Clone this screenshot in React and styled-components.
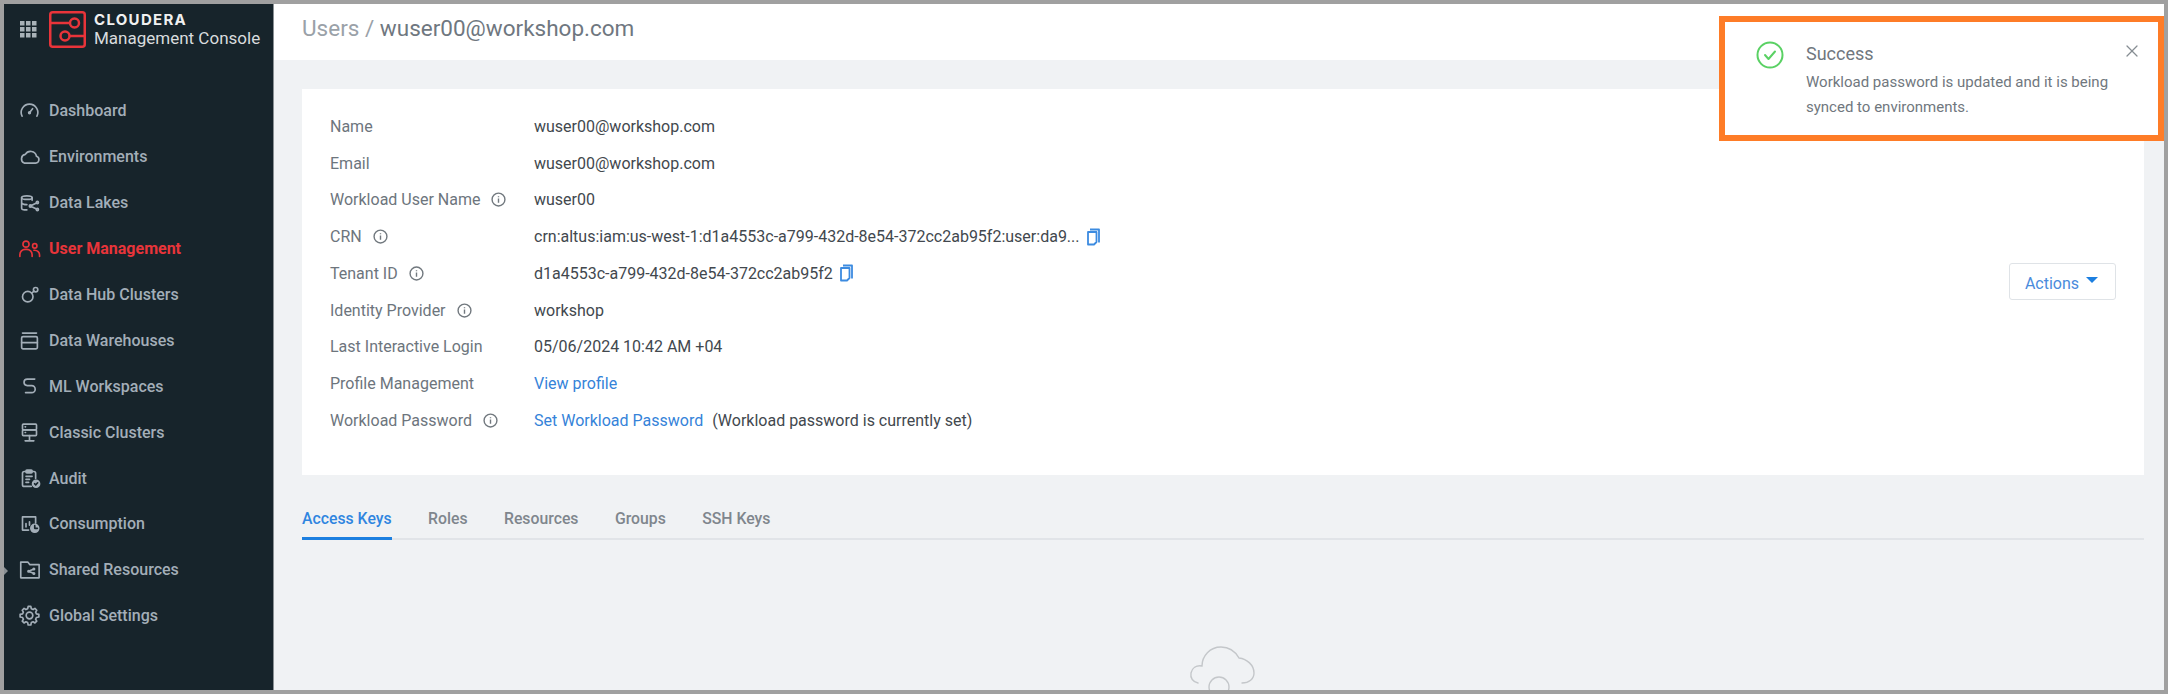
import React from 'react';
import styled, { createGlobalStyle } from 'styled-components';
import { X } from 'lucide-react';

const GlobalStyle = createGlobalStyle`
    html, body {
        margin: 0;
        height: 100%;
        overflow: hidden;
        background: #f0f2f4;
    }
    * {
        box-sizing: border-box;
    }
`;

const Frame = styled.div`
    position: relative;
    display: flex;
    height: 100vh;
    overflow: hidden;
    border: 4px solid #a0a0a0;
    font-family: Roboto, "Liberation Sans", sans-serif;
`;

const Sidebar = styled.aside`
    position: relative;
    flex: 0 0 270px;
    background: #17242b;
    border-right: 1px solid #8a9094;
`;

const Brand = styled.div`
    display: flex;
    align-items: center;
    height: 46px;
    margin-top: 2px;
    padding-left: 16px;
`;

const Waffle = styled.svg`
    width: 17px;
    height: 17px;
    margin-right: 12px;
    fill: #a9b2b8;
`;

const BrandText = styled.div`
    display: flex;
    flex-direction: column;
    margin-left: 8px;
    color: #d9dcde;
`;

const BrandName = styled.div`
    font-family: Inter, sans-serif;
    font-size: 15px;
    font-weight: 700;
    line-height: 17px;
    letter-spacing: 1.3px;
    color: #f0f0f0;
`;

const BrandProduct = styled.div`
    font-size: 17px;
    line-height: 20px;
    white-space: nowrap;
`;

const Nav = styled.nav`
    display: flex;
    flex-direction: column;
    margin-top: 36px;
`;

const NavItem = styled.div`
    display: flex;
    align-items: center;
    height: 45.9px;
    padding-left: 14px;
    gap: 8px;
    font-size: 16px;
    font-weight: ${(p) => (p.$active ? 700 : 500)};
    color: ${(p) => (p.$active ? '#e8343a' : '#a3aeb8')};
`;

const NavIcon = styled.svg`
    flex: none;
    width: 23px;
    height: 21px;
    fill: none;
    stroke: currentColor;
    stroke-width: 1.9;
    stroke-linecap: round;
    stroke-linejoin: round;
`;

const ExpandArrow = styled.div`
    position: absolute;
    left: 0;
    top: 563px;
    width: 0;
    height: 0;
    border-top: 4px solid transparent;
    border-bottom: 4px solid transparent;
    border-left: 4px solid #8a9094;
`;

const Main = styled.main`
    flex: 1;
    min-width: 0;
    display: flex;
    flex-direction: column;
    background: #f0f2f4;
`;

const Header = styled.header`
    flex: 0 0 56px;
    display: flex;
    align-items: center;
    padding: 0 0 8px 28px;
    background: #fff;
    font-size: 22.5px;
    color: #6f7780;
`;

const Crumb = styled.span`
    color: #9aa1a8;
`;

const Content = styled.div`
    flex: 1;
    min-height: 0;
    overflow: hidden;
    padding: 29px 20px 0 28px;
`;

const Card = styled.section`
    display: flex;
    align-items: flex-start;
    justify-content: space-between;
    height: 386px;
    padding: 19px 28px 0;
    background: #fff;
`;

const Details = styled.div`
    display: grid;
    grid-template-columns: 204px auto;
    grid-auto-rows: 36.75px;
    align-items: center;
    font-size: 16px;
`;

const Label = styled.div`
    display: flex;
    align-items: center;
    gap: 11px;
    color: #6d757d;
`;

const Value = styled.div`
    display: flex;
    align-items: center;
    color: #42484e;
`;

const LinkText = styled.span`
    color: #3583d9;
`;

const Note = styled.span`
    margin-left: 9px;
`;

const InfoIcon = styled.svg`
    width: 15px;
    height: 15px;
    fill: none;
    stroke: #71787e;
    stroke-width: 1.3;
`;

const CopyIcon = styled.svg`
    width: 15px;
    height: 18px;
    margin-left: 6px;
    fill: none;
    stroke: #3c8be0;
    stroke-width: 1.8;
    stroke-linejoin: round;
`;

const ActionsButton = styled.button`
    display: flex;
    align-items: center;
    justify-content: center;
    gap: 7px;
    width: 107px;
    height: 37px;
    margin-top: 155px;
    padding: 4px 2px 0 0;
    background: #fff;
    border: 1px solid #dfe3e7;
    border-radius: 3px;
    font-family: inherit;
    font-size: 16px;
    color: #4a8bdc;
`;

const Caret = styled.span`
    width: 0;
    height: 0;
    margin-top: -8px;
    border-left: 6px solid transparent;
    border-right: 6px solid transparent;
    border-top: 6px solid #1c7fe0;
`;

const Tabs = styled.div`
    display: flex;
    gap: 36.4px;
    margin-top: 24px;
    height: 41px;
    border-bottom: 2px solid #e1e4e8;
`;

const Tab = styled.div`
    height: 41px;
    padding-top: 10px;
    font-size: 15.8px;
    font-weight: 500;
    color: ${(p) => (p.$active ? '#2f85e0' : '#7f868d')};
    border-bottom: 3px solid ${(p) => (p.$active ? '#1c7fe0' : 'transparent')};
`;

const EmptyState = styled.div`
    display: flex;
    justify-content: center;
    margin-top: 100px;
`;

const EmptyIcon = styled.svg`
    width: 68px;
    height: 50px;
    fill: none;
    stroke: #c4c7ca;
    stroke-width: 1.4;
    stroke-linecap: round;
`;

const Toast = styled.div`
    position: absolute;
    top: 12px;
    right: 0;
    display: flex;
    width: 445px;
    height: 125px;
    padding: 21px 0 0 31px;
    background: #fff;
    border: 6px solid #fe7c27;
`;

const ToastIcon = styled.svg`
    flex: none;
    width: 28px;
    height: 28px;
    margin-right: 22px;
    margin-top: -2px;
    fill: none;
    stroke: #5ad164;
    stroke-width: 2;
    stroke-linecap: round;
    stroke-linejoin: round;
`;

const ToastBody = styled.div`
    width: 330px;
    color: #70777e;
`;

const ToastTitle = styled.div`
    font-size: 18px;
    line-height: 22px;
`;

const ToastText = styled.div`
    margin-top: 5px;
    font-size: 15px;
    line-height: 25px;
`;

const CloseIcon = styled(X)`
    position: absolute;
    top: 19px;
    right: 16px;
    color: #868d93;
`;

const NAV_ITEMS = [
    {
        label: 'Dashboard',
        icon: (
            <>
                <path d="M4.5 18.5a9.5 9.5 0 1 1 17 0" />
                <circle cx="13" cy="14.5" r="1" />
                <path d="M13.6 13.6 16.5 10" />
            </>
        ),
    },
    {
        label: 'Environments',
        icon: <path d="M7 19.5h13a4 4 0 0 0 1-7.8A7 7 0 0 0 8.2 9.6 5.2 5.2 0 0 0 7 19.5z" />,
    },
    {
        label: 'Data Lakes',
        icon: (
            <>
                <ellipse cx="10" cy="6.5" rx="6" ry="2" />
                <path d="M4 6.5v12c0 1 2 2 6 2M16 6.5v3M4 12.5c1 1.500 3 2 6 2" />
                <circle cx="22" cy="12" r="1.200" />
                <circle cx="22" cy="20" r="1.200" />
                <circle cx="14" cy="16" r="1.200" />
                <path d="m15 15.500 6-3M15 16.500l6 3" />
            </>
        ),
    },
    {
        label: 'User Management',
        active: true,
        icon: (
            <>
                <circle cx="9" cy="7" r="3.500" />
                <circle cx="19" cy="9" r="2.500" />
                <path d="M2 21v-2a6 6 0 0 1 6-6h2a6 6 0 0 1 6 6v2M18 14h1a5.500 5.500 0 0 1 5.500 5.500V21" />
            </>
        ),
    },
    {
        label: 'Data Hub Clusters',
        icon: (
            <>
                <circle cx="11" cy="14.500" r="6" />
                <circle cx="20" cy="6.500" r="2.500" />
                <path d="m15.500 10.500 2.700-2.300" />
            </>
        ),
    },
    {
        label: 'Data Warehouses',
        icon: (
            <>
                <path d="M5 3.500h16" />
                <rect x="4" y="7.500" width="18" height="14" rx="1.500" />
                <path d="M4 14.500h18" />
            </>
        ),
    },
    {
        label: 'ML Workspaces',
        icon: <path d="M19 3.500H10.500a3.500 3.500 0 0 0 0 7.500h5a3.800 3.800 0 0 1 0 8H8.500" />,
    },
    {
        label: 'Classic Clusters',
        icon: (
            <>
                <rect x="5" y="2.500" width="16" height="6.500" rx="1" />
                <rect x="5" y="9" width="16" height="6.500" rx="1" />
                <path d="M13 15.500V21M8 21.500h10M8 5.500h.5M8 12h.5" />
            </>
        ),
    },
    {
        label: 'Audit',
        icon: (
            <>
                <path d="M15 21H7a2 2 0 0 1-2-2V6a2 2 0 0 1 2-2h11a2 2 0 0 1 2 2v6" />
                <rect x="9" y="2.500" width="7" height="3" rx="1" />
                <path d="M9 9.500h7M9 13h4M9 16.500h3" />
                <circle cx="20.500" cy="18" r="4" fill="currentColor" />
                <path d="m18.800 18 1.300 1.300 2.200-2.400" stroke="#17242b" />
            </>
        ),
    },
    {
        label: 'Consumption',
        icon: (
            <>
                <path d="M12 19.500H5v-15h15v7" />
                <path d="M9 16v-4M13 14v-4" />
                <circle cx="19" cy="17.500" r="4.500" fill="currentColor" />
                <path d="M19 14.500v3h3" stroke="#17242b" />
            </>
        ),
    },
    {
        label: 'Shared Resources',
        icon: (
            <>
                <path d="M3 3.500h8l2.500 3H24v15H3z" />
                <circle cx="12" cy="14" r=".8" />
                <circle cx="18" cy="11.500" r=".8" />
                <circle cx="18" cy="16.500" r=".8" />
                <path d="m12.500 13.800 5-2.200M12.500 14.200l5 2.200" />
            </>
        ),
    },
    {
        label: 'Global Settings',
        icon: (
            <>
                <circle cx="13" cy="12" r="3.800" />
                <path d="M11.500 1.500h3l.6 2.800 2 .9 2.100-1.300 2.100 2.100-1.300 2.100.9 2 2.800.6v3l-2.800.6-.9 2 1.300 2.100-2.100 2.100-2.100-1.300-2 .9-.6 2.800h-3l-.6-2.800-2-.9-2.100 1.300-2.100-2.100 1.300-2.100-.9-2-2.800-.6v-3l2.800-.6.900-2-1.300-2.100 2.100-2.100 2.100 1.300 2-.9z" />
            </>
        ),
    },
];

const TABS = ['Access Keys', 'Roles', 'Resources', 'Groups', 'SSH Keys'];

const Info = () => (
    <InfoIcon viewBox="0 0 14 14">
        <circle cx="7" cy="7" r="6" />
        <path d="M7 6v4M7 4v1" />
    </InfoIcon>
);

const Copy = () => (
    <CopyIcon viewBox="0 0 15 18">
        <path d="M4 1.500h9v13" />
        <path d="M2 4h8.500v10L8 16.500H2z" />
    </CopyIcon>
);

const Logo = () => (
    <svg width="37" height="37" viewBox="0 0 37 37" fill="none" stroke="#e8343a" strokeWidth="2.500">
        <rect x="1.250" y="1.250" width="34.500" height="34.500" rx="2.500" />
        <circle cx="25.500" cy="12" r="4.500" />
        <circle cx="16" cy="25" r="4.500" />
        <path d="M1 12h20M20.500 25H36" />
    </svg>
);

const App = () => {
    const waffle = [];
    for (let r = 0; r < 3; r++) {
        for (let c = 0; c < 3; c++) {
            waffle.push(<rect key={`${r}${c}`} x={c * 6} y={r * 6} width="4.500" height="4.500" />);
        }
    }

    return (
        <>
            <GlobalStyle />
            <Frame>
                <Sidebar>
                    <Brand>
                        <Waffle viewBox="0 0 17 17">{waffle}</Waffle>
                        <Logo />
                        <BrandText>
                            <BrandName>CLOUDERA</BrandName>
                            <BrandProduct>Management Console</BrandProduct>
                        </BrandText>
                    </Brand>
                    <Nav>
                        {NAV_ITEMS.map((item) => (
                            <NavItem key={item.label} $active={item.active}>
                                <NavIcon viewBox="0 0 26 24">{item.icon}</NavIcon>
                                {item.label}
                            </NavItem>
                        ))}
                    </Nav>
                    <ExpandArrow />
                </Sidebar>
                <Main>
                    <Header>
                        <Crumb>Users /&nbsp;</Crumb>wuser00@workshop.com
                    </Header>
                    <Content>
                        <Card>
                            <Details>
                                <Label>Name</Label>
                                <Value>wuser00@workshop.com</Value>
                                <Label>Email</Label>
                                <Value>wuser00@workshop.com</Value>
                                <Label>Workload User Name <Info /></Label>
                                <Value>wuser00</Value>
                                <Label>CRN <Info /></Label>
                                <Value>crn:altus:iam:us-west-1:d1a4553c-a799-432d-8e54-372cc2ab95f2:user:da9... <Copy /></Value>
                                <Label>Tenant ID <Info /></Label>
                                <Value>d1a4553c-a799-432d-8e54-372cc2ab95f2 <Copy /></Value>
                                <Label>Identity Provider <Info /></Label>
                                <Value>workshop</Value>
                                <Label>Last Interactive Login</Label>
                                <Value>05/06/2024 10:42 AM +04</Value>
                                <Label>Profile Management</Label>
                                <Value><LinkText>View profile</LinkText></Value>
                                <Label>Workload Password <Info /></Label>
                                <Value>
                                    <LinkText>Set Workload Password</LinkText>
                                    <Note>(Workload password is currently set)</Note>
                                </Value>
                            </Details>
                            <ActionsButton>Actions <Caret /></ActionsButton>
                        </Card>
                        <Tabs>
                            {TABS.map((tab, i) => (
                                <Tab key={tab} $active={i === 0}>{tab}</Tab>
                            ))}
                        </Tabs>
                        <EmptyState>
                            <EmptyIcon viewBox="0 0 68 50">
                                <path d="M9 43c-5-1-8-5-7-10 1-5 5-8 11-7 0-10 8-19 19-19 8 0 14 4 18 11 8 1 15 7 15 15 0 6-5 10-12 10" />
                                <circle cx="30" cy="47" r="10" />
                            </EmptyIcon>
                        </EmptyState>
                    </Content>
                </Main>
                <Toast>
                    <ToastIcon viewBox="0 0 28 28">
                        <circle cx="14" cy="14" r="12.500" />
                        <path d="m9 14 3.500 4L19 10.500" />
                    </ToastIcon>
                    <ToastBody>
                        <ToastTitle>Success</ToastTitle>
                        <ToastText>Workload password is updated and it is being synced to environments.</ToastText>
                    </ToastBody>
                    <CloseIcon size={20} strokeWidth={1.5} />
                </Toast>
            </Frame>
        </>
    );
};

export default App;
